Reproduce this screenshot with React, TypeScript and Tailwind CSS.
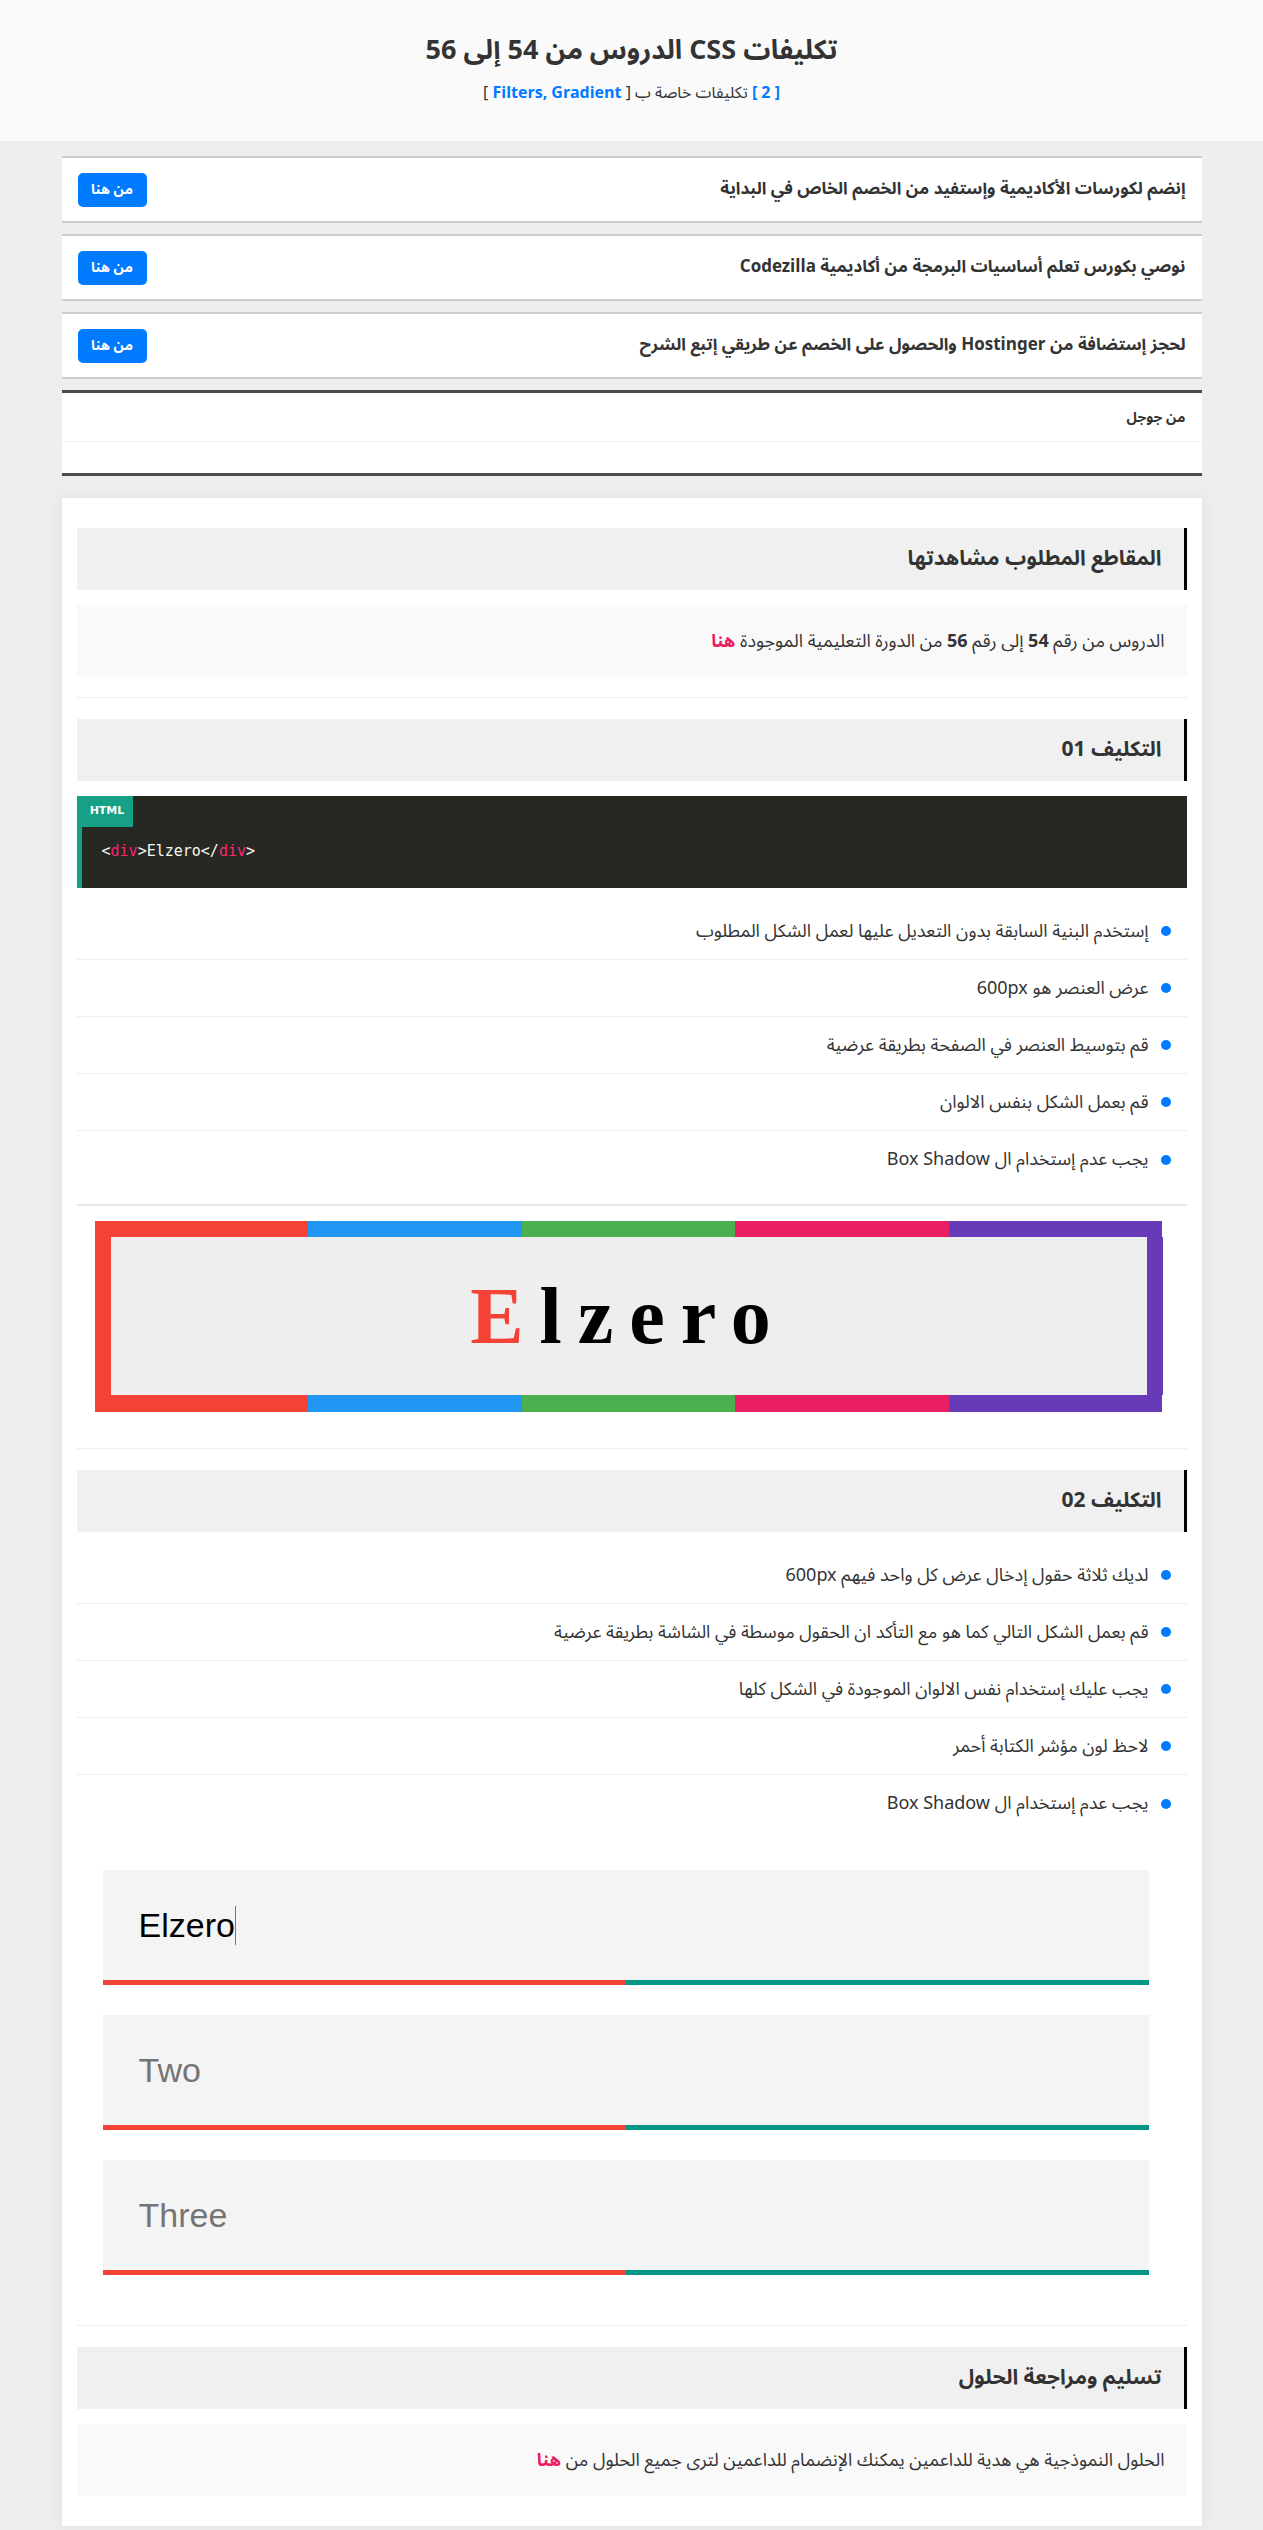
import React from 'react';

const AR = "font-['Noto_Sans_Arabic','Noto_Sans','DejaVu_Sans',sans-serif]";

const ADS = [
  'إنضم لكورسات الأكاديمية وإستفيد من الخصم الخاص في البداية',
  'نوصي بكورس تعلم أساسيات البرمجة من أكاديمية Codezilla',
  'لحجز إستضافة من Hostinger والحصول على الخصم عن طريقي إتبع الشرح',
];

const TASK_ONE = [
  'إستخدم البنية السابقة بدون التعديل عليها لعمل الشكل المطلوب',
  'عرض العنصر هو 600px',
  'قم بتوسيط العنصر في الصفحة بطريقة عرضية',
  'قم بعمل الشكل بنفس الالوان',
  'يجب عدم إستخدام ال Box Shadow',
];

const TASK_TWO = [
  'لديك ثلاثة حقول إدخال عرض كل واحد فيهم 600px',
  'قم بعمل الشكل التالي كما هو مع التأكد ان الحقول موسطة في الشاشة بطريقة عرضية',
  'يجب عليك إستخدام نفس الالوان الموجودة في الشكل كلها',
  'لاحظ لون مؤشر الكتابة أحمر',
  'يجب عدم إستخدام ال Box Shadow',
];

const FRAME = ['bg-[#f44336]', 'bg-[#2196f3]', 'bg-[#4caf50]', 'bg-[#e91e63]', 'bg-[#673ab7]'];

function Heading({ children }: { children: React.ReactNode }) {
  return (
    <h2 className="h-[62px] bg-[#f0f0f0] border-r-[3px] border-black flex items-center pr-[22px] text-[21px] font-bold text-[#333]">
      {children}
    </h2>
  );
}

function Info({ children }: { children: React.ReactNode }) {
  return (
    <div className="mt-[15px] h-[72px] bg-[#f9f9f9] flex items-center px-[22px] text-[18px] text-[#333]">
      {children}
    </div>
  );
}

function Divider() {
  return <div className="mt-[20px] mb-[21px] border-t border-[#eeeeee]" />;
}

function Tasks({ items }: { items: string[] }) {
  return (
    <ul className="mt-[15px]">
      {items.map((t, i) => (
        <li
          key={t}
          className={`h-[57px] flex items-center pr-[16px] gap-[12px] text-[18px] text-[#333] ${
            i < items.length - 1 ? 'border-b border-[#eeeeee]' : ''
          }`}
        >
          <span className="w-[10px] h-[10px] rounded-full bg-[#007bff] shrink-0" />
          <span>{t}</span>
        </li>
      ))}
    </ul>
  );
}

function Field({ value, placeholder }: { value?: string; placeholder?: string }) {
  return (
    <div className="w-[1046px]">
      <div className="h-[110px] bg-[#f4f4f4] flex items-center pl-[36px] font-['Liberation_Sans',Arial,sans-serif] text-[34px]">
        {value ? (
          <>
            <span className="text-black">{value}</span>
            <span className="w-px h-[39px] bg-[#f44336]" />
          </>
        ) : (
          <span className="text-[#757575]">{placeholder}</span>
        )}
      </div>
      <div className="flex h-[5px]">
        <div className="flex-1 bg-[#f44336]" />
        <div className="flex-1 bg-[#009688]" />
      </div>
    </div>
  );
}

export default function App() {
  return (
    <div dir="rtl" className={`min-h-screen bg-[#eeeeee] text-[#333] ${AR}`}>
      <header className="h-[141px] bg-[#fafafa] flex flex-col items-center pt-[32px]">
        <h1 className="text-[27px] font-bold leading-[38px] text-[#333]">تكليفات CSS الدروس من 54 إلى 56</h1>
        <p className="mt-[10px] text-[16px] leading-[26px] text-[#333]">
          <span className="text-[#007bff] font-bold">[ 2 ]</span> تكليفات خاصة ب [{' '}
          <span className="text-[#007bff] font-bold">Filters, Gradient</span> ]
        </p>
      </header>

      <div className="w-[1140px] mx-auto pt-[15px]">
        {ADS.map((ad) => (
          <div
            key={ad}
            className="h-[67px] mb-[11px] bg-white border-y-2 border-[#cccccc] flex items-center justify-between px-[16px]"
          >
            <span className="text-[17px] font-bold text-[#333]">{ad}</span>
            <a className="w-[69px] h-[34px] rounded-[5px] bg-[#007bff] text-white text-[14px] font-bold flex items-center justify-center">
              من هنا
            </a>
          </div>
        ))}

        <div className="mt-[7px] bg-white border-y-[3px] border-[#4b4b4b]">
          <div className="h-[48px] flex items-center px-[16px] text-[14px] font-bold text-[#333]">من جوجل</div>
          <div className="h-[32px] border-t border-[#eeeeee]" />
        </div>

        <main className="mt-[22px] bg-white shadow-[0_0_12px_#dddddd] px-[15px] pt-[30px] pb-[30px]">
          <Heading>المقاطع المطلوب مشاهدتها</Heading>
          <Info>
            <span>
              الدروس من رقم <b>54</b> إلى رقم <b>56</b> من الدورة التعليمية الموجودة{' '}
              <b className="text-[#e91e63]">هنا</b>
            </span>
          </Info>

          <Divider />

          <Heading>التكليف 01</Heading>
          <div dir="ltr" className="mt-[15px] h-[92px] bg-[#272822] border-l-[5px] border-[#16a085]">
            <div className="w-[51px] h-[31px] bg-[#16a085] text-white text-[11px] font-bold flex items-center justify-center font-['DejaVu_Sans',sans-serif]">
              HTML
            </div>
            <pre className="pl-[20px] pt-[12px] text-[15px] leading-[24px] text-[#f8f8f2] font-['DejaVu_Sans_Mono',monospace]">
              &lt;<span className="text-[#f92672]">div</span>&gt;Elzero&lt;/<span className="text-[#f92672]">div</span>&gt;
            </pre>
          </div>
          <Tasks items={TASK_ONE} />

          <div className="mt-[16px] border-t-2 border-[#e6e6e6]" />

          <div dir="ltr" className="mt-[15px] pl-[18px]">
            <div className="w-[1068px] h-[191px] flex flex-col">
              <div className="flex h-[16px]">
                {FRAME.map((c) => (
                  <div key={c} className={`flex-1 ${c}`} />
                ))}
              </div>
              <div className="flex flex-1">
                <div className="w-[16px] bg-[#f44336]" />
                <div className="flex-1 bg-[#eeeeee] flex items-center justify-center">
                  <span className="font-['Liberation_Serif','Times_New_Roman',serif] font-bold text-[80px] leading-none tracking-[16px] text-black">
                    <span className="text-[#f44336]">E</span>lzero
                  </span>
                </div>
                <div className="w-[16px] bg-[#673ab7]" />
              </div>
              <div className="flex h-[17px]">
                {FRAME.map((c) => (
                  <div key={c} className={`flex-1 ${c}`} />
                ))}
              </div>
            </div>
          </div>

          <div className="mt-[36px] mb-[21px] border-t border-[#eeeeee]" />

          <Heading>التكليف 02</Heading>
          <Tasks items={TASK_TWO} />

          <div dir="ltr" className="mt-[38px] pl-[26px] flex flex-col gap-[30px]">
            <Field value="Elzero" />
            <Field placeholder="Two" />
            <Field placeholder="Three" />
          </div>

          <div className="mt-[50px] mb-[21px] border-t border-[#eeeeee]" />

          <Heading>تسليم ومراجعة الحلول</Heading>
          <Info>
            <span>
              الحلول النموذجية هي هدية للداعمين يمكنك الإنضمام للداعمين لترى جميع الحلول من{' '}
              <b className="text-[#e91e63]">هنا</b>
            </span>
          </Info>
        </main>
      </div>
    </div>
  );
}
